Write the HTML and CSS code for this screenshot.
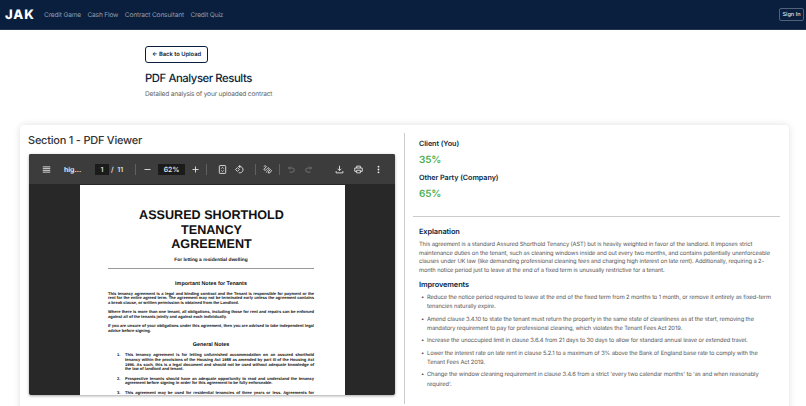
FILE: index.html
```
<!DOCTYPE html>
<html lang="en">

<head>
  <meta charset="UTF-8">
  <title>PDF Analyser Results</title>
  <link rel="stylesheet" href="styles.css">
</head>

<body>
  <nav class="navbar">
    <a class="brand">JAK</a>
    <div class="nav-links">
      <a>Credit Game</a>
      <a>Cash Flow</a>
      <a>Contract Consultant</a>
      <a>Credit Quiz</a>
    </div>
    <button class="sign-in-btn">Sign In</button>
  </nav>

  <header class="page-header">
    <button class="back-btn">← Back to Upload</button>
    <h1>PDF Analyser Results</h1>
    <p>Detailed analysis of your uploaded contract</p>
  </header>

  <main class="results-card">
    <section class="viewer-section">
      <h2>Section 1 - PDF Viewer</h2>
      <div class="pdf-viewer">
        <div class="toolbar">
          <svg class="icon menu-icon" viewBox="0 0 24 24"><path d="M2 5h20M2 9.7h20M2 14.3h20M2 19h20"/></svg>
          <span class="file-name">hig...</span>
          <span class="page-input">1</span>
          <span class="page-total">/&nbsp; 11</span>
          <i class="sep sep-page"></i>
          <svg class="icon minus-icon" viewBox="0 0 24 24"><path d="M4 12h16"/></svg>
          <span class="zoom-input">62%</span>
          <svg class="icon plus-icon" viewBox="0 0 24 24"><path d="M4 12h16M12 4v16"/></svg>
          <i class="sep sep-zoom"></i>
          <svg class="icon fit-icon" viewBox="0 0 24 24"><rect x="3.5" y="1.5" width="17" height="21" rx="2"/><path d="M9 9.5l3-3 3 3M9 14.5l3 3 3-3"/></svg>
          <svg class="icon rotate-icon" viewBox="0 0 24 24"><path d="M6.5 7l5 5-5 5-5-5zM10 4h3a8.5 8.5 0 1 1-3 16.500M14 0l-4 4 4 4"/></svg>
          <i class="sep sep-rotate"></i>
          <svg class="icon draw-icon" viewBox="0 0 24 24"><path d="M2 4c4-3 9-1 6 2s-7 4-5 7 6-1 9-4 6-1 4 2-6 5-7 9M14 21l1-4 5-5 3 3-5 6z"/></svg>
          <i class="sep sep-draw"></i>
          <svg class="icon undo-icon dim" viewBox="0 0 24 24"><path d="M8 4L4 8l4 4M4 8h10a5 5 0 0 1 0 11H7"/></svg>
          <svg class="icon redo-icon dim" viewBox="0 0 24 24"><path d="M16 4l4 4-4 4M20 8H10a5 5 0 0 0 0 11h7"/></svg>
          <svg class="icon download-icon" viewBox="0 0 24 24"><path d="M12 2v13M7 10l5 5 5-5M3 16v5h18v-5"/></svg>
          <svg class="icon print-icon" viewBox="0 0 24 24"><path d="M7 8V3h10v5M7 17H2V8h20v9h-5M7 14h10v7H7z"/></svg>
          <svg class="icon more-icon" viewBox="0 0 24 24"><circle cx="12" cy="4.5" r="2.4"/><circle cx="12" cy="12" r="2.4"/><circle cx="12" cy="19.5" r="2.4"/></svg>
        </div>
        <div class="pdf-canvas">
          <article class="pdf-page">
            <div class="pdf-title">ASSURED SHORTHOLD<br>TENANCY<br>AGREEMENT</div>
            <div class="pdf-subtitle">For letting a residential dwelling</div>
            <hr>
            <h4>Important Notes for Tenants</h4>
            <p>This tenancy agreement is a legal and binding contract and the Tenant is responsible for payment or the rent for the entire agreed term. The agreement may not be terminated early unless the agreement contains a break clause, or written permission is obtained from the Landlord.</p>
            <p>Where there is more than one tenant, all obligations, including those for rent and repairs can be enforced against all of the tenants jointly and against each individually.</p>
            <p>If you are unsure of your obligations under this agreement, then you are advised to take independent legal advice before signing.</p>
            <h4 class="general">General Notes</h4>
            <ol>
              <li>This tenancy agreement is for letting unfurnished accommodation on an assured shorthold tenancy within the provisions of the Housing Act 1988 as amended by part III of the Housing Act 1996. As such, this is a legal document and should not be used without adequate knowledge of the law of landlord and tenant.</li>
              <li>Prospective tenants should have an adequate opportunity to read and understand the tenancy agreement before signing in order for this agreement to be fully enforceable.</li>
              <li class="cut">This agreement may be used for residential tenancies of three years or less. Agreements for</li>
            </ol>
          </article>
        </div>
      </div>
    </section>

    <section class="analysis-section">
      <div class="scores">
        <h3>Client (You)</h3>
        <div class="score">35%</div>
        <h3>Other Party (Company)</h3>
        <div class="score">65%</div>
      </div>
      <div class="details">
        <h3>Explanation</h3>
        <p>This agreement is a standard Assured Shorthold Tenancy (AST) but is heavily weighted in favor of the landlord. It imposes strict<br>maintenance duties on the tenant, such as cleaning windows inside and out every two months, and contains potentially unenforceable<br>clauses under UK law (like demanding professional cleaning fees and charging high interest on late rent). Additionally, requiring a 2-<br>month notice period just to leave at the end of a fixed term is unusually restrictive for a tenant.</p>
        <h3>Improvements</h3>
        <ul>
          <li>Reduce the notice period required to leave at the end of the fixed term from 2 months to 1 month, or remove it entirely as fixed-term<br>tenancies naturally expire.</li>
          <li>Amend clause 3.4.10 to state the tenant must return the property in the same state of cleanliness as at the start, removing the<br>mandatory requirement to pay for professional cleaning, which violates the Tenant Fees Act 2019.</li>
          <li>Increase the unoccupied limit in clause 3.6.4 from 21 days to 30 days to allow for standard annual leave or extended travel.</li>
          <li>Lower the interest rate on late rent in clause 5.2.1 to a maximum of 3% above the Bank of England base rate to comply with the<br>Tenant Fees Act 2019.</li>
          <li>Change the window cleaning requirement in clause 3.4.6 from a strict 'every two calendar months' to 'as and when reasonably<br>required'.</li>
        </ul>
      </div>
    </section>
  </main>
</body>

</html>
```
FILE: styles.css
```
* {
  box-sizing: border-box;
}

body {
  margin: 0;
  height: 406px;
  overflow: hidden;
  background-color: #fff;
  color: #333;
  font-family: Inter, 'Liberation Sans', sans-serif;
  text-rendering: geometricPrecision;
}

h1,
h2,
h3,
h4,
p,
ul,
ol {
  margin: 0;
  padding: 0;
}

button {
  font-family: inherit;
  padding: 0;
  text-rendering: inherit;
}

/* Navigation */
.navbar {
  display: flex;
  align-items: center;
  height: 30px;
  padding: 0 2px 0 5px;
  background-color: #0a1f3d;
  border-bottom: 1px solid #233754;
}

.brand {
  width: 39px;
  color: #fff;
  font-size: 13px;
  font-weight: 800;
  letter-spacing: 0.9px;
}

.nav-links {
  display: flex;
  gap: 6.5px;
  flex: 1;
  padding-top: 1px;
  color: #929dad;
  font-size: 6.6px;
  letter-spacing: -0.18px;
  white-space: nowrap;
}

.sign-in-btn {
  width: 25px;
  height: 13px;
  background: none;
  border: 1px solid #53627a;
  border-radius: 2px;
  color: #dfe3e9;
  font-size: 5.6px;
  font-weight: 500;
}

/* Page heading */
.page-header {
  height: 95px;
  padding: 16px 0 0 145px;
}

.back-btn {
  display: block;
  width: 63px;
  height: 17px;
  background-color: #fff;
  border: 1px solid #0a1f3d;
  border-radius: 3px;
  color: #0a1f3d;
  font-size: 5.8px;
  font-weight: 600;
}

.page-header h1 {
  margin-top: 8px;
  color: #0a1f3d;
  font-size: 11.3px;
  line-height: 15px;
  font-weight: 500;
  letter-spacing: -0.42px;
}

.page-header p {
  margin-top: 3px;
  color: #666;
  font-size: 6.6px;
  line-height: 10px;
  letter-spacing: -0.19px;
}

/* Results card */
.results-card {
  display: flex;
  width: 769px;
  height: 300px;
  margin-left: 20px;
  padding: 8px;
  border-radius: 4px;
  background-color: #fff;
  box-shadow: 0 0 7px rgba(0, 0, 0, 0.13);
}

.viewer-section {
  width: 377px;
  height: 271px;
  border-right: 1px solid #ccc;
}

.viewer-section h2 {
  height: 21px;
  font-size: 11px;
  line-height: 15px;
  font-weight: 500;
  letter-spacing: -0.23px;
}

.pdf-viewer {
  width: 366px;
  height: 241px;
  margin-left: 1px;
  border-radius: 2px;
  overflow: hidden;
  background-color: #282828;
  box-shadow: 0 1px 3px rgba(0, 0, 0, 0.35);
}

.toolbar {
  display: flex;
  align-items: center;
  height: 30px;
  padding-left: 13px;
  background-color: #3c3c3c;
  color: #f1f1f1;
  font-size: 7px;
  font-weight: 500;
  white-space: nowrap;
}

.icon {
  flex: none;
  width: 9px;
  height: 9px;
  fill: none;
  stroke: #e4e4e4;
  stroke-width: 2.4;
}

.dim {
  stroke: #777;
}

.more-icon {
  fill: #eee;
  stroke: none;
}

.file-name {
  width: 18px;
  margin-left: 13px;
  font-weight: 600;
}

.page-input,
.zoom-input {
  height: 11px;
  background-color: #1b1b1b;
  line-height: 11px;
  text-align: center;
}

.page-input {
  width: 14px;
  margin-left: 13px;
}

.page-total {
  width: 14px;
  margin-left: 2px;
}

.sep {
  flex: none;
  width: 1px;
  height: 11px;
  background-color: #606060;
}

.sep-page { margin-left: 10px; }
.minus-icon { margin-left: 7px; }
.zoom-input { width: 27px; margin-left: 6px; }
.plus-icon { margin-left: 6px; }
.sep-zoom { margin-left: 6px; }
.fit-icon { margin-left: 11px; }
.rotate-icon { margin-left: 8px; }
.sep-rotate { margin-left: 11px; }
.draw-icon { margin-left: 7px; }
.sep-draw { margin-left: 7px; }
.undo-icon { margin-left: 7px; }
.redo-icon { margin-left: 8px; }
.download-icon { margin-left: 21.5px; }
.print-icon { margin-left: 10.5px; }
.more-icon { margin-left: 10.5px; }

/* Document page inside the viewer */
.pdf-canvas {
  padding: 1px 0 0 51px;
}

.pdf-page {
  width: 265px;
  height: 210px;
  padding: 23px 31px 0 28px;
  background-color: #fff;
  color: #111;
  font-family: 'Liberation Sans', Arial, sans-serif;
  font-weight: 700;
}

.pdf-title {
  margin-left: 1px;
  font-size: 12.6px;
  line-height: 14.5px;
  text-align: center;
}

.pdf-subtitle {
  margin-top: 6px;
  font-size: 4.8px;
  line-height: 6px;
  text-align: center;
}

.pdf-page hr {
  height: 1px;
  margin: 4px 0 12px;
  border: 0;
  background-color: #999;
}

.pdf-page h4 {
  margin-bottom: 4px;
  font-size: 5.4px;
  line-height: 7px;
  text-align: center;
}

.pdf-page p,
.pdf-page li {
  font-size: 4.1px;
  line-height: 4.65px;
  letter-spacing: -0.02px;
  text-align: justify;
}

.pdf-page p {
  margin-bottom: 4.6px;
}

.pdf-page .general {
  margin: 9px 0 4px;
}

.pdf-page ol {
  padding-left: 17px;
  list-style: none;
  counter-reset: note;
}

.pdf-page li {
  margin-bottom: 4.65px;
  counter-increment: note;
}

.pdf-page li::before {
  content: counter(note) '.';
  float: left;
  width: 8px;
  margin-left: -8px;
  text-align: left;
  text-align-last: left;
}

.pdf-page .cut {
  margin-bottom: 0;
  text-align-last: justify;
}

/* Analysis column */
.analysis-section {
  width: 375px;
  padding-left: 8px;
  white-space: nowrap;
}

.analysis-section h3 {
  color: #0a1f3d;
  font-size: 7.2px;
  line-height: 10px;
  font-weight: 600;
  letter-spacing: -0.05px;
}

.scores {
  height: 84px;
  padding: 6px 0 0 6px;
  border-bottom: 1px solid #ccc;
}

.score {
  height: 23.5px;
  padding-top: 4px;
  color: #4caf50;
  font-size: 10px;
  line-height: 14px;
  font-weight: 600;
  letter-spacing: -0.2px;
}

.details {
  padding: 10px 0 0 6px;
  color: #555;
  font-size: 5.75px;
  letter-spacing: -0.1px;
}

.details h3 {
  font-size: 7.4px;
  letter-spacing: -0.1px;
}

.details p {
  margin: 4px 0 5px;
  line-height: 8.55px;
}

.details ul {
  margin-top: 3px;
  padding-left: 8px;
  line-height: 9.1px;
  list-style: none;
}

.details li {
  margin-bottom: 3.4px;
}

.details li::before {
  content: '•';
  float: left;
  width: 6px;
  margin-left: -6px;
}
```
